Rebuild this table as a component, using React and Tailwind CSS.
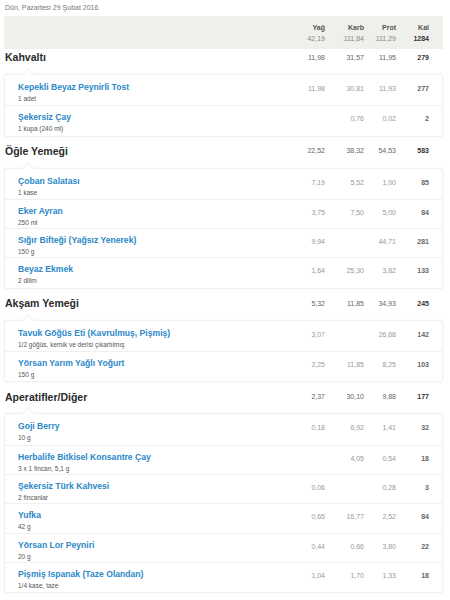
import React from "react";

const sections = [
  {
    title: "Kahvaltı",
    totals: ["11,98", "31,57", "11,95", "279"],
    items: [
      ["Kepekli Beyaz Peynirli Tost", "1 adet", "11,98", "30,81", "11,93", "277"],
      ["Şekersiz Çay", "1 kupa (240 ml)", "", "0,76", "0,02", "2"],
    ],
  },
  {
    title: "Öğle Yemeği",
    totals: ["22,52", "38,32", "54,53", "583"],
    items: [
      ["Çoban Salatası", "1 kase", "7,19", "5,52", "1,00", "85"],
      ["Eker Ayran", "250 ml", "3,75", "7,50", "5,00", "84"],
      ["Sığır Bifteği (Yağsız Yenerek)", "150 g", "9,94", "", "44,71", "281"],
      ["Beyaz Ekmek", "2 dilim", "1,64", "25,30", "3,82", "133"],
    ],
  },
  {
    title: "Akşam Yemeği",
    totals: ["5,32", "11,85", "34,93", "245"],
    items: [
      ["Tavuk Göğüs Eti (Kavrulmuş, Pişmiş)", "1/2 göğüs, kemik ve derisi çıkartılmış", "3,07", "", "26,68", "142"],
      ["Yörsan Yarım Yağlı Yoğurt", "150 g", "2,25", "11,85", "8,25", "103"],
    ],
  },
  {
    title: "Aperatifler/Diğer",
    totals: ["2,37", "30,10", "9,88", "177"],
    items: [
      ["Goji Berry", "10 g", "0,18", "6,92", "1,41", "32"],
      ["Herbalife Bitkisel Konsantre Çay", "3 x 1 fincan, 5,1 g", "", "4,05", "0,54", "18"],
      ["Şekersiz Türk Kahvesi", "2 fincanlar", "0,06", "", "0,28", "3"],
      ["Yufka", "42 g", "0,65", "16,77", "2,52", "84"],
      ["Yörsan Lor Peyniri", "20 g", "0,44", "0,66", "3,80", "22"],
      ["Pişmiş Ispanak (Taze Olandan)", "1/4 kase, taze", "1,04", "1,70", "1,33", "18"],
    ],
  },
];

function Nums({ v, cls, kalCls }) {
  return (
    <div className="flex shrink-0 pr-[14px]">
      <div className={`w-[40px] text-right ${cls}`}>{v[0]}</div>
      <div className={`w-[39px] text-right ${cls}`}>{v[1]}</div>
      <div className={`w-[32px] text-right ${cls}`}>{v[2]}</div>
      <div className={`w-[33px] text-right ${kalCls}`}>{v[3]}</div>
    </div>
  );
}

export default function App() {
  return (
    <div
      className="w-[450px] bg-white pb-[10px]"
      style={{ fontFamily: '"Liberation Sans", Arial, sans-serif' }}
    >
      <div className="pl-[5px] pt-[3px] text-[7px] leading-[9px] text-[#777]">
        Dün, Pazartesi 29 Şubat 2016
      </div>
      <div className="mx-[4px] mt-[4px] w-[439px] h-[33px] bg-[#efefeb] flex items-center justify-end">
        <div className="flex flex-col gap-[2px]">
          <Nums
            v={["Yağ", "Karb", "Prot", "Kal"]}
            cls="text-[7px] leading-[9px] font-bold text-[#555]"
            kalCls="text-[7px] leading-[9px] font-bold text-[#555]"
          />
          <Nums
            v={["42,19", "111,84", "111,29", "1284"]}
            cls="text-[7px] leading-[9px] text-[#888]"
            kalCls="text-[7px] leading-[9px] font-bold text-[#333]"
          />
        </div>
      </div>
      {sections.map((s, si) => (
        <div key={si}>
          <div
            className={`flex items-center h-[16px] w-[443px] ${si === 0 ? "mt-[1px]" : "mt-[7px]"}`}
          >
            <div className="flex-1 pl-[5px] text-[10.5px] font-bold text-[#2a2a2a]">{s.title}</div>
            <Nums
              v={s.totals}
              cls="text-[7px] text-[#666]"
              kalCls="text-[7px] font-bold text-[#333]"
            />
          </div>
          <div className="relative mx-[4px] mt-[8px] w-[439px] border border-[#f0f0f0] rounded-[2px] bg-white shadow-[0_0_3px_rgba(0,0,0,0.04)] py-[1px]">
            <div className="absolute -top-[5px] left-[19px] w-[9px] h-[9px] rotate-45 bg-white border-l border-t border-[#f0f0f0]" />
            {s.items.map((it, ii) => (
              <div
                key={ii}
                className={`relative flex h-[29.3px] ${ii > 0 ? "border-t border-[#f0f0f0]" : ""}`}
              >
                <div className="flex-1 pl-[13px] pt-[6px]">
                  <div className="text-[8.6px] leading-[10px] font-bold text-[#2a88c8] whitespace-nowrap">
                    {it[0]}
                  </div>
                  <div className="text-[6.5px] leading-[9px] mt-[2px] text-[#555] whitespace-nowrap">
                    {it[1]}
                  </div>
                </div>
                <div className="pt-[8px] -mr-[1px]">
                  <Nums
                    v={it.slice(2)}
                    cls="text-[7px] leading-[9px] text-[#999]"
                    kalCls="text-[7px] leading-[9px] font-bold text-[#666]"
                  />
                </div>
              </div>
            ))}
          </div>
        </div>
      ))}
    </div>
  );
}
